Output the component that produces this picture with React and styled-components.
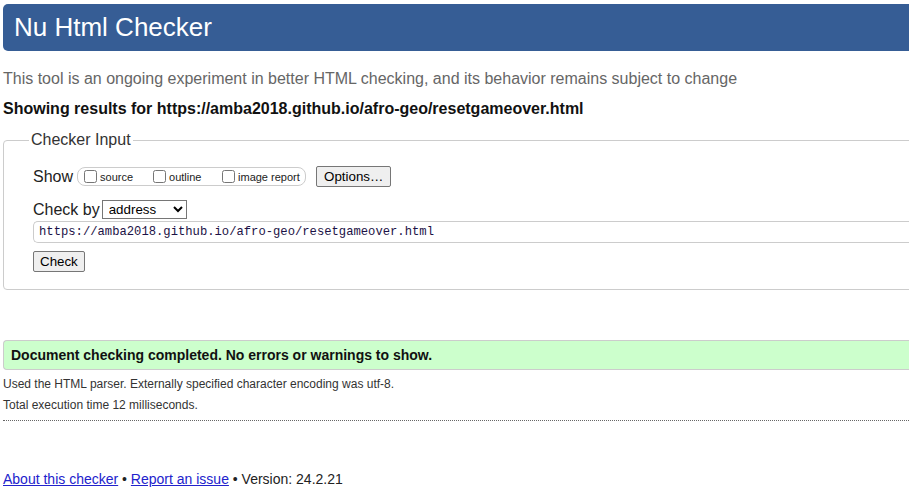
import React from 'react';
import styled, { createGlobalStyle } from 'styled-components';

const GlobalStyle = createGlobalStyle`
  html, body {
    margin: 0;
    padding: 0;
    overflow-x: hidden;
    background: #fff;
  }
  body {
    font-family: "Liberation Sans", Arial, sans-serif;
    color: #111;
  }
`;

// the page is wider than the window, so the right edges are cut off
const Page = styled.div`
  width: 940px;
  padding: 4px 0 0 3px;
`;

const Header = styled.h1`
  margin: 0;
  height: 47px;
  line-height: 47px;
  padding-left: 11px;
  background: #365d95;
  color: #fff;
  font-size: 26px;
  font-weight: normal;
  border-radius: 5px 0 0 5px;
`;

const Intro = styled.p`
  margin: 19px 0 0;
  font-size: 16px;
  line-height: 18px;
  color: #666;
`;

const Results = styled.p`
  margin: 12px 0 0;
  font-size: 16px;
  line-height: 18px;
  font-weight: bold;
  color: #111;
`;

const Fieldset = styled.fieldset`
  margin: 13px 0 0;
  padding: 17px 0 17px 29px;
  border: 1px solid #ccc;
  border-radius: 4px 0 0 4px;
`;

const Legend = styled.legend`
  margin-left: -4px;
  padding: 0 2px;
  font-size: 16px;
  color: #333;
`;

const Row = styled.div`
  display: flex;
  align-items: center;
  font-size: 16px;
  color: #222;
  margin-bottom: ${p => p.$gap || 0}px;
`;

const RowLabel = styled.span`
  margin-right: ${p => p.$space || 0}px;
`;

const OptionGroup = styled.div`
  display: flex;
  align-items: center;
  height: 17px;
  border: 1px solid #ccc;
  border-radius: 8px;
  padding: 0 5px 0 6px;
  margin: 0 10px 0 1px;
  width: 216px;
`;

const OptionLabel = styled.label`
  display: flex;
  align-items: center;
  font-size: 11px;
  color: #222;
  width: ${p => p.$width}px;
`;

const Box = styled.input.attrs({ type: 'checkbox' })`
  margin: 0 3px 0 0;
  width: 13px;
  height: 13px;
`;

const Button = styled.button`
  font-family: "Liberation Sans", Arial, sans-serif;
  font-size: 13.33px;
  height: 21px;
  padding: 0 ${p => p.$pad || 6}px;
  background: #efefef;
  border: 1px solid #767676;
  border-radius: 2px;
  color: #000;
`;

const Select = styled.select`
  font-family: "Liberation Sans", Arial, sans-serif;
  font-size: 13.33px;
  height: 19px;
  width: 85px;
  padding: 0 2px;
  border: 1px solid #767676;
  border-radius: 0;
  background: #fff;
  color: #000;
`;

const UrlInput = styled.input`
  display: block;
  box-sizing: border-box;
  width: 100%;
  height: 22px;
  margin: 2px 0 8px;
  padding: 0 5px;
  font-family: "Liberation Mono", monospace;
  font-size: 12.2px;
  color: #1c1246;
  border: 1px solid #ccc;
  border-right: none;
  border-radius: 5px 0 0 5px;
  outline: none;
`;

const Success = styled.div`
  margin-top: 50px;
  height: 30px;
  box-sizing: border-box;
  padding-left: 7px;
  display: flex;
  align-items: center;
  background: #ccffcc;
  border: 1px solid #ccc;
  border-right: none;
  border-radius: 4px 0 0 4px;
  font-size: 14px;
  font-weight: bold;
  color: #111;
`;

const Detail = styled.p`
  margin: ${p => p.$top}px 0 0;
  font-size: 12px;
  line-height: 14px;
  color: #333;
`;

const Rule = styled.hr`
  margin: 8px 0 0;
  border: none;
  border-top: 1px dotted #666;
  width: 906px;
`;

const Footer = styled.p`
  margin: 50px 0 0;
  font-size: 14px;
  line-height: 16px;
  color: #222;
`;

const Link = styled.a`
  color: #2222cc;
  text-decoration: underline;
`;

export default function App() {
  return (
    <Page>
      <GlobalStyle />
      <Header>Nu Html Checker</Header>
      <Intro>This tool is an ongoing experiment in better HTML checking, and its behavior remains subject to change</Intro>
      <Results>Showing results for https://amba2018.github.io/afro-geo/resetgameover.html</Results>

      <Fieldset>
        <Legend>Checker Input</Legend>
        <Row $gap={13}>
          <RowLabel $space={3}>Show</RowLabel>
          <OptionGroup>
            <OptionLabel $width={69}><Box />source</OptionLabel>
            <OptionLabel $width={69}><Box />outline</OptionLabel>
            <OptionLabel $width={78}><Box />image report</OptionLabel>
          </OptionGroup>
          <Button $pad={7}>Options…</Button>
        </Row>
        <Row>
          <RowLabel $space={2}>Check by</RowLabel>
          <Select defaultValue="address">
            <option value="address">address</option>
            <option value="file">file upload</option>
            <option value="text">text input</option>
          </Select>
        </Row>
        <UrlInput readOnly value="https://amba2018.github.io/afro-geo/resetgameover.html" />
        <Button>Check</Button>
      </Fieldset>

      <Success>Document checking completed. No errors or warnings to show.</Success>
      <Detail $top={7}>Used the HTML parser. Externally specified character encoding was utf-8.</Detail>
      <Detail $top={7}>Total execution time 12 milliseconds.</Detail>
      <Rule />

      <Footer>
        <Link href="#about">About this checker</Link> • <Link href="#report">Report an issue</Link> • Version: 24.2.21
      </Footer>
    </Page>
  );
}
